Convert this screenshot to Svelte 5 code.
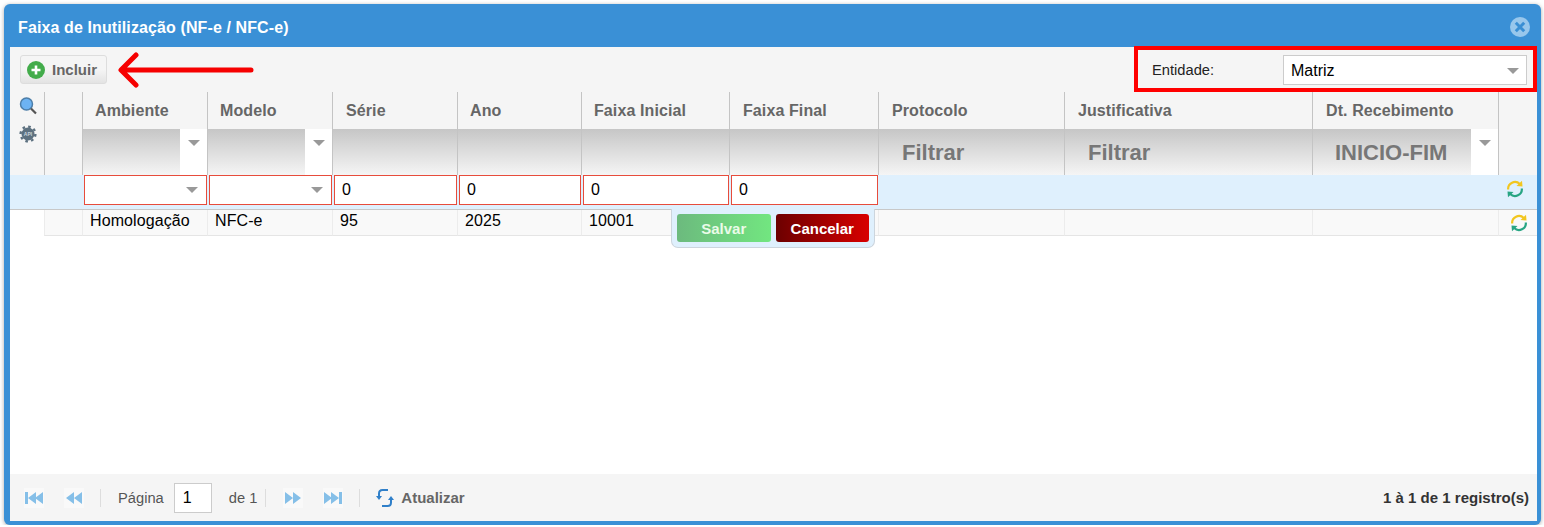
<script>
  const cols = [
    { t: 'Ambiente', f: 'select' }, { t: 'Modelo', f: 'select' }, { t: 'Série', f: '' }, { t: 'Ano', f: '' },
    { t: 'Faixa Inicial', f: '' }, { t: 'Faixa Final', f: '' }, { t: 'Protocolo', f: 'Filtrar' },
    { t: 'Justificativa', f: 'Filtrar' }, { t: 'Dt. Recebimento', f: 'INICIO-FIM' }
  ];
  const editCells = ['s', 's', '0', '0', '0', '0'];
  const row = ['Homologação', 'NFC-e', '95', '2025', '10001', '', '', '', ''];
</script>

{#snippet caret()}
  <span class="caret"></span>
{/snippet}

{#snippet refresh()}
  <svg class="rf" viewBox="0 0 18 18" width="18" height="18" fill="none" stroke-width="2.2">
    <path d="M2.2 9.500 A6.800 6.800 0 0 1 13.800 4" stroke="#f2c61f" />
    <path d="M10.500 6 L16.500 6.600 L16 0.800 Z" fill="#f2c61f" />
    <path d="M15.800 8.500 A6.800 6.800 0 0 1 4.200 14" stroke="#27a583" />
    <path d="M7.500 12 L1.500 11.400 L2 17.200 Z" fill="#27a583" />
  </svg>
{/snippet}

<div class="win">
  <header class="title">
    <span>Faixa de Inutilização (NF-e / NFC-e)</span>
    <svg class="close" viewBox="0 0 20 20" width="20" height="20">
      <circle cx="10" cy="10" r="10" fill="#98c7ec" />
      <path d="M5.800 5.800 L14.200 14.200 M14.200 5.800 L5.800 14.200" stroke="#3a8fd4" stroke-width="3" />
    </svg>
  </header>

  <div class="body">
    <div class="toolbar">
      <button class="add">
        <svg viewBox="0 0 18 18" width="18" height="18">
          <circle cx="9" cy="9" r="9" fill="#43ac4b" />
          <path d="M9 4.500 V13.500 M4.500 9 H13.500" stroke="#fff" stroke-width="2.600" />
        </svg>
        Incluir
      </button>
      <div class="entity">
        <span class="elabel">Entidade:</span>
        <div class="eselect">Matriz {@render caret()}</div>
      </div>
    </div>

    <div class="grid headrow">
      <div class="tools">
        <svg viewBox="0 0 18 18" width="18" height="18" fill="none">
          <circle cx="7.500" cy="7" r="6" fill="#6db3f2" stroke="#4d7ea8" stroke-width="1.500" />
          <path d="M12 11.500 L17 16.500" stroke="#555" stroke-width="2.200" />
        </svg>
        <svg viewBox="0 0 18 18" width="18" height="18">
          <circle cx="9" cy="9" r="6.500" fill="#5d7180" />
          <circle cx="9" cy="9" r="7.400" fill="none" stroke="#5d7180" stroke-width="2.400" stroke-dasharray="2.600 3.200" />
          <text x="9" y="11" text-anchor="middle" class="api">API</text>
        </svg>
      </div>
      <div class="hc blank"></div>
      {#each cols as c}
        <div class="hc">
          <div class="ht">{c.t}</div>
          {#if c.f === 'select'}
            <div class="ft sel"><div class="grad"></div><div class="drop">{@render caret()}</div></div>
          {:else if c.f === 'INICIO-FIM'}
            <div class="ft sel"><div class="grad txt date">{c.f}</div><div class="drop">{@render caret()}</div></div>
          {:else}
            <div class="ft grad txt">{c.f}</div>
          {/if}
        </div>
      {/each}
      <div class="hc last"></div>
    </div>

    <div class="grid editrow">
      <div></div><div></div>
      {#each editCells as v}
        <div class="ec">
          <div class="inp">{#if v === 's'}{@render caret()}{:else}{v}{/if}</div>
        </div>
      {/each}
      <div></div><div></div><div></div>
      <div class="ic e">{@render refresh()}</div>
    </div>

    <div class="grid datarow">
      <div class="nobg"></div><div class="dc"></div>
      {#each row as v}
        <div class="dc">{v}</div>
      {/each}
      <div class="dc ic">{@render refresh()}</div>
    </div>

    <div class="spacer"></div>

    <footer class="pager">
      <div class="pleft">
        <span class="pb"><svg viewBox="0 0 20 20" width="20" height="20"><path d="M1 4h3v12H1z M4 10l8-6v12z M11 10l8-6v12z" fill="#85bfe8"/></svg></span>
        <span class="pb"><svg viewBox="0 0 20 20" width="20" height="20"><path d="M2 10l8-6v12z M10 10l8-6v12z" fill="#85bfe8"/></svg></span>
        <span class="sep"></span>
        <span class="pg">Página</span>
        <span class="pinp">1</span>
        <span class="pg de">de 1</span>
        <span class="sep s2"></span>
        <span class="pb nx"><svg viewBox="0 0 20 20" width="20" height="20"><path d="M2 4l8 6-8 6z M10 4l8 6-8 6z" fill="#85bfe8"/></svg></span>
        <span class="pb"><svg viewBox="0 0 20 20" width="20" height="20"><path d="M1 4l8 6-8 6z M8 4l8 6-8 6z M16 4h3v12h-3z" fill="#85bfe8"/></svg></span>
        <span class="sep s3"></span>
        <svg class="upd" viewBox="0 0 18 20" width="18" height="20" fill="none" stroke="#2f7fc9" stroke-width="2">
          <path d="M3 9 V5.500 Q3 2 6.500 2 H12" />
          <path d="M15 11 V14.500 Q15 18 11.500 18 H6" />
          <path d="M0 8 H6 L3 12 Z M12 12 H18 L15 8 Z" fill="#2f7fc9" stroke="none" />
        </svg>
        <span class="atual">Atualizar</span>
      </div>
      <div class="count">1 à 1 de 1 registro(s)</div>
    </footer>
  </div>

  <div class="pop">
    <span class="save">Salvar</span>
    <span class="cancel">Cancelar</span>
  </div>
  <div class="redbox"></div>
  <svg class="arrow" viewBox="0 0 140 40" width="140" height="40" fill="none" stroke="#f60000" stroke-width="5" stroke-linecap="round" stroke-linejoin="round">
    <path d="M134 18 H5 M19 3 L4 18 L19 33" />
  </svg>
</div>

<style>
  :global(body) { margin: 0; background: #fff; font-family: "Liberation Sans", Arial, sans-serif; }
  .win {
    position: relative; box-sizing: border-box; width: 1537px; height: 521px; margin: 4px 0 0 4px;
    background: #3a90d6; border-radius: 6px 6px 6px 6px; box-shadow: 0 1px 4px rgba(0,0,0,.35);
    display: flex; flex-direction: column; padding: 0 4px 4px 6px;
  }
  .title {
    height: 43px; flex: none; display: flex; align-items: center; justify-content: space-between;
    color: #fff; font-weight: 700; font-size: 16px; letter-spacing: .11px; padding: 4px 7px 0 8px; box-sizing: border-box;
  }
  .close { display: block; margin-top: -2px; }
  .body { flex: 1; background: #fff; display: flex; flex-direction: column; min-height: 0; }
  .toolbar {
    height: 45px; flex: none; background: #f5f5f5; display: flex; justify-content: space-between;
    padding: 8px 10px 0 10px; box-sizing: border-box; align-items: flex-start;
  }
  .add {
    width: 87px; height: 29px; box-sizing: border-box; border: 1px solid #ddd; border-radius: 3px;
    background: linear-gradient(#f5f5f5 50%, #e3e3e3); display: flex; align-items: center; gap: 7px;
    padding: 0 0 0 6px; color: #666; font: 700 15px "Liberation Sans", Arial, sans-serif;
  }
  .entity { display: flex; align-items: center; }
  .elabel { width: 131px; font-size: 14.700px; color: #222; }
  .eselect {
    width: 244px; height: 30px; box-sizing: border-box; background: #fff; border: 1px solid #ccc;
    display: flex; align-items: center; justify-content: space-between; padding: 2px 7px 0;
    font-size: 16px; color: #000;
  }
  .caret {
    display: block; width: 0; height: 0; border-left: 6px solid transparent; border-right: 6px solid transparent;
    border-top: 6px solid #999;
  }
  .grid {
    display: grid; flex: none;
    grid-template-columns: 34px 38px 125px 125px 125px 124px 148px 149px 186px 248px 186px 39px;
  }
  .headrow { height: 83px; background: #f5f5f5; }
  .tools { display: flex; flex-direction: column; align-items: center; gap: 10px; padding-top: 5px; margin-left: 2px; }
  .tools svg { display: block; }
  .api { font: 700 5px "Liberation Sans", Arial, sans-serif; fill: #c8d4dc; }
  .hc { border-left: 1px solid #c4c4c4; display: flex; flex-direction: column; min-width: 0; box-sizing: border-box; }
  .ht { height: 37px; flex: none; font-weight: 700; font-size: 16px; letter-spacing: .1px; color: #666; padding: 10px 0 0 12px; box-sizing: border-box; }
  .hc:nth-child(5) .ht, .hc:nth-child(n+8) .ht { padding-left: 13px; }
  .ft { flex: 1; min-height: 0; display: flex; }
  .grad { background: linear-gradient(#c6c6c6, #f5f5f5); flex: 1; }
  .txt { font-weight: 700; font-size: 22px; color: #777; padding: 11px 0 0 23px; box-sizing: border-box; }
  .txt.date { padding-left: 22px; }
  .drop { width: 27px; flex: none; background: #fff; padding: 11px 0 0 8px; box-sizing: border-box; }
  .editrow { height: 35px; background: #dff0fd; border-bottom: 1px solid #c8c8c8; box-sizing: border-box; }
  .ec { padding: 0 0 0 2px; min-width: 0; }
  .inp {
    height: 30px; box-sizing: border-box; background: #fff; border: 1px solid #e74c3c;
    display: flex; align-items: center; justify-content: flex-end; padding: 0 8px 0 7px; font-size: 16px; color: #000;
  }
  .ec:nth-child(n+5) .inp { justify-content: flex-start; }
  .ic { display: flex; align-items: center; justify-content: center; }
  .ic.e { padding-bottom: 6px; padding-right: 5px; }
  .rf { display: block; }
  .datarow { height: 26px; }
  .nobg { background: #fff; }
  .dc {
    background: #f9f9f9; border-left: 1px solid #ececec; border-bottom: 1px solid #e5e5e5; box-sizing: border-box;
    font-size: 16px; letter-spacing: .09px; color: #000; padding: 2px 0 0 7px; white-space: nowrap; min-width: 0;
  }
  .dc.ic { padding: 0 0 0 2px; }
  .spacer { flex: 1; }
  .pager {
    height: 47px; flex: none; background: #f5f5f5; display: flex; align-items: center; justify-content: space-between;
    padding: 0 8px 0 14px; box-sizing: border-box;
  }
  .pleft { display: flex; align-items: center; }
  .pb { width: 20px; height: 20px; background: #f9f9f9; display: block; margin-right: 20px; }
  .pb svg { display: block; }
  .sep { width: 1px; height: 18px; background: #ddd; margin-right: 17px; margin-left: -4px; }
  .pg { font-size: 14.700px; color: #555; }
  .pinp {
    width: 38px; height: 30px; box-sizing: border-box; border: 1px solid #ccc; background: #fff; margin: 0 17px 0 10px;
    font-size: 16px; color: #000; padding: 5px 0 0 8px;
  }
  .s2 { margin: 0 17px 0 8px; }
  .s3 { margin: 0 16px 0 -4px; }
  .upd { margin-right: 7px; display: block; }
  .atual { font-weight: 700; font-size: 15px; color: #666; }
  .count { font-weight: 700; font-size: 15px; color: #333; }
  .pop {
    position: absolute; left: 667px; top: 205px; width: 204px; height: 39px; box-sizing: border-box;
    background: #dff0fd; border: 1px solid #ccd5dd; border-top: none; border-radius: 0 0 7px 7px;
    display: flex; gap: 5px; padding: 5px 5px 0 5px;
  }
  .pop span {
    width: 94px; height: 28px; border-radius: 3px; color: #fff; font-weight: 700; font-size: 15px;
    display: flex; align-items: center; justify-content: center;
  }
  .save { background: linear-gradient(90deg, #6cba7e, #72e680); color: #eafbe8 !important; }
  .cancel { background: linear-gradient(90deg, #6c0000, #d80000); }
  .redbox {
    position: absolute; left: 1130px; top: 42px; width: 403px; height: 46px; box-sizing: border-box; border: 4px solid #f00;
    pointer-events: none;
  }
  .arrow { position: absolute; left: 113px; top: 48px; }
</style>
